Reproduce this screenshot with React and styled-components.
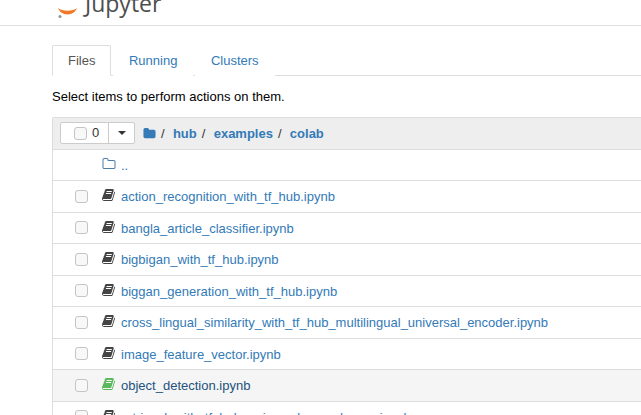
import React from 'react';
import styled, { createGlobalStyle } from 'styled-components';

const Global = createGlobalStyle`
  html, body { margin: 0; padding: 0; background: #fff; overflow: hidden; }
  body { font-family: "Liberation Sans", Arial, sans-serif; font-size: 13px; line-height: 18px; color: #000; }
  * { box-sizing: border-box; }
`;

const Page = styled.div`
  width: 641px;
  height: 415px;
  overflow: hidden;
`;

const Header = styled.header`
  height: 26px;
  border-bottom: 1px solid #e0e0e0;
  padding-left: 57px;
  overflow: hidden;
`;

const LogoRow = styled.div`
  display: flex;
  align-items: flex-end;
  height: 25px;
  gap: 6px;
`;

const Wordmark = styled.span`
  font-family: "Open Sans", "Liberation Sans", sans-serif;
  font-size: 23px;
  line-height: 30px;
  color: #4e4e4e;
  margin-bottom: 7px;
`;

const Main = styled.main`
  padding: 19px 0 0 52px;
  width: 660px;
`;

const Tabs = styled.ul`
  display: flex;
  list-style: none;
  margin: 0;
  padding: 0;
  height: 31px;
  border-bottom: 1px solid #ddd;
`;

const Tab = styled.li`
  height: 31px;
  padding: 6px 15px;
  margin-right: 1.5px;
  color: ${(p) => (p.$active ? '#555' : '#337ab7')};
  background: #fff;
  border: 1px solid ${(p) => (p.$active ? '#ddd' : 'transparent')};
  border-bottom-color: ${(p) => (p.$active ? '#fff' : 'transparent')};
  border-radius: 2px 2px 0 0;
`;

const Hint = styled.p`
  margin: 0;
  padding-top: 12px;
  height: 41px;
`;

const List = styled.div`
  border: 1px solid #ddd;
  border-right: 0;
  border-radius: 2px 2px 0 0;
`;

const ListHeader = styled.div`
  display: flex;
  align-items: center;
  height: 31.5px;
  padding-left: 7px;
  background: #eee;
  border-bottom: 1px solid #ddd;
`;

const SelectGroup = styled.div`
  display: flex;
  width: 75px;
  height: 22px;
  background: #fff;
  border: 1px solid #ccc;
  border-radius: 2px;
  margin-right: 8px;
`;

const SelectMain = styled.div`
  flex: 1;
  display: flex;
  align-items: center;
  padding-left: 13px;
  gap: 5px;
  border-right: 1px solid #ccc;
  color: #333;
  font-size: 13px;
`;

const Caret = styled.div`
  width: 25px;
  display: flex;
  align-items: center;
  justify-content: center;
  &::after {
    content: '';
    border-top: 4px solid #333;
    border-left: 4px solid transparent;
    border-right: 4px solid transparent;
  }
`;

const Crumbs = styled.div`
  display: flex;
  align-items: center;
  padding-top: 1px;
  font-weight: 700;
  color: #337ab7;
`;

const Slash = styled.span`
  color: #333;
  font-weight: 400;
  margin: 0 8.3px 0 5px;
`;

const Crumb = styled.span`
  color: #337ab7;
`;

const Row = styled.div`
  display: flex;
  align-items: center;
  height: 31.5px;
  padding: 2px 0 0 21.5px;
  border-bottom: 1px solid #ddd;
  background: ${(p) => (p.$selected ? '#f5f5f5' : '#fff')};
`;

const Box = styled.span`
  flex: none;
  width: 13px;
  height: 13px;
  border: 1px solid #c4c4c4;
  border-radius: 3px;
  background: #f8f8f8;
`;

const RowBox = styled(Box)`
  margin-bottom: 2px;
`;

const IconSlot = styled.span`
  flex: none;
  display: flex;
  width: 14px;
  margin: 0 5px 4px 14.5px;
`;

const Name = styled.a`
  color: ${(p) => (p.$selected ? '#23527c' : '#337ab7')};
  white-space: nowrap;
`;

const Spacer = styled.span`
  flex: none;
  width: 13px;
`;

const JupyterMark = () => (
  <svg width="22" height="25" viewBox="0 0 22 25" aria-hidden="true">
    <path d="M1 8 C4 16.5 17 16.5 20 8 C16 11.5 5 11.5 1 8 Z" fill="#f37726" />
    <circle cx="3" cy="16.5" r="1.6" fill="#989798" />
  </svg>
);

const BOOK =
  'M1639 478q40 57 18 129l-275 906q-19 64-76.500 107.500t-122.500 43.500h-923q-77 0-148.500-53.500t-99.500-131.500q-24-67-2-127 0-4 3-27t4-37q1-8-3-21.500t-3-19.500q2-11 8-21t16.500-23.500 16.500-23.500q23-38 45-91.500t30-91.500q3-10 .5-30t-.5-28q3-11 17-28t17-23q21-36 42-92t25-90q1-9-2.500-32t.5-28q4-13 22-30.500t22-22.500q19-26 42.500-84.500t27.500-96.500q1-8-3-25.500t-2-26.500q2-8 9-18t18-23 17-21q8-12 16.500-30.500t15-35 16-36 19.500-32 26.500-23.500 36-11.500 47.500 5.500l-1 3q38-9 51-9h761q74 0 114 56t18 130l-274 906q-36 119-71.500 153.500t-128.500 34.500h-869q-27 0-38 15-11 16-1 43 24 70 144 70h923q29 0 56-15.500t35-41.500l300-987q7-22 5-57 38 15 59 43zm-1064 2q-4 13 2 22.500t20 9.500h608q13 0 25.500-9.500t16.500-22.500l21-64q4-13-2-22.500t-20-9.500h-608q-13 0-25.500 9.500t-16.500 22.500zm-83 256q-4 13 2 22.500t20 9.500h608q13 0 25.500-9.500t16.500-22.500l21-64q4-13-2-22.500t-20-9.500h-608q-13 0-25.500 9.500t-16.500 22.500z';
const FOLDER =
  'M1728 608v704q0 92-66 158t-158 66h-1216q-92 0-158-66t-66-158v-960q0-92 66-158t158-66h320q92 0 158 66t66 158v32h672q92 0 158 66t66 158z';
const FOLDER_OPEN =
  'M1600 1312v-704q0-40-28-68t-68-28h-704q-40 0-68-28t-28-68v-64q0-40-28-68t-68-28h-320q-40 0-68 28t-28 68v960q0 40 28 68t68 28h1216q40 0 68-28t28-68zm128-704v704q0 92-66 158t-158 66h-1216q-92 0-158-66t-66-158v-960q0-92 66-158t158-66h320q92 0 158 66t66 158v32h672q92 0 158 66t66 158z';

const Glyph = ({ d, color, size = 14 }) => (
  <svg width={size} height={size} viewBox="0 0 1792 1792" aria-hidden="true">
    <path d={d} fill={color} />
  </svg>
);

const files = [
  'action_recognition_with_tf_hub.ipynb',
  'bangla_article_classifier.ipynb',
  'bigbigan_with_tf_hub.ipynb',
  'biggan_generation_with_tf_hub.ipynb',
  'cross_lingual_similarity_with_tf_hub_multilingual_universal_encoder.ipynb',
  'image_feature_vector.ipynb',
  'object_detection.ipynb',
  'retrieval_with_tf_hub_universal_encoder_qa.ipynb',
];

export default function App() {
  return (
    <Page>
      <Global />
      <Header>
        <LogoRow>
          <JupyterMark />
          <Wordmark>Jupyter</Wordmark>
        </LogoRow>
      </Header>
      <Main>
        <Tabs>
          <Tab $active>Files</Tab>
          <Tab>Running</Tab>
          <Tab>Clusters</Tab>
        </Tabs>
        <Hint>Select items to perform actions on them.</Hint>
        <List>
          <ListHeader>
            <SelectGroup>
              <SelectMain><Box />0</SelectMain>
              <Caret />
            </SelectGroup>
            <Crumbs>
              <Glyph d={FOLDER} color="#337ab7" size={13} />
              <Slash>/</Slash>
              <Crumb>hub</Crumb>
              <Slash>/</Slash>
              <Crumb>examples</Crumb>
              <Slash>/</Slash>
              <Crumb>colab</Crumb>
            </Crumbs>
          </ListHeader>
          <Row>
            <Spacer />
            <IconSlot><Glyph d={FOLDER_OPEN} color="#4d7ca8" /></IconSlot>
            <Name>..</Name>
          </Row>
          {files.map((f) => {
            const selected = f === 'object_detection.ipynb';
            return (
              <Row key={f} $selected={selected}>
                <RowBox />
                <IconSlot>
                  <Glyph d={BOOK} color={selected ? '#5cb85c' : '#444'} />
                </IconSlot>
                <Name $selected={selected}>{f}</Name>
              </Row>
            );
          })}
        </List>
      </Main>
    </Page>
  );
}
